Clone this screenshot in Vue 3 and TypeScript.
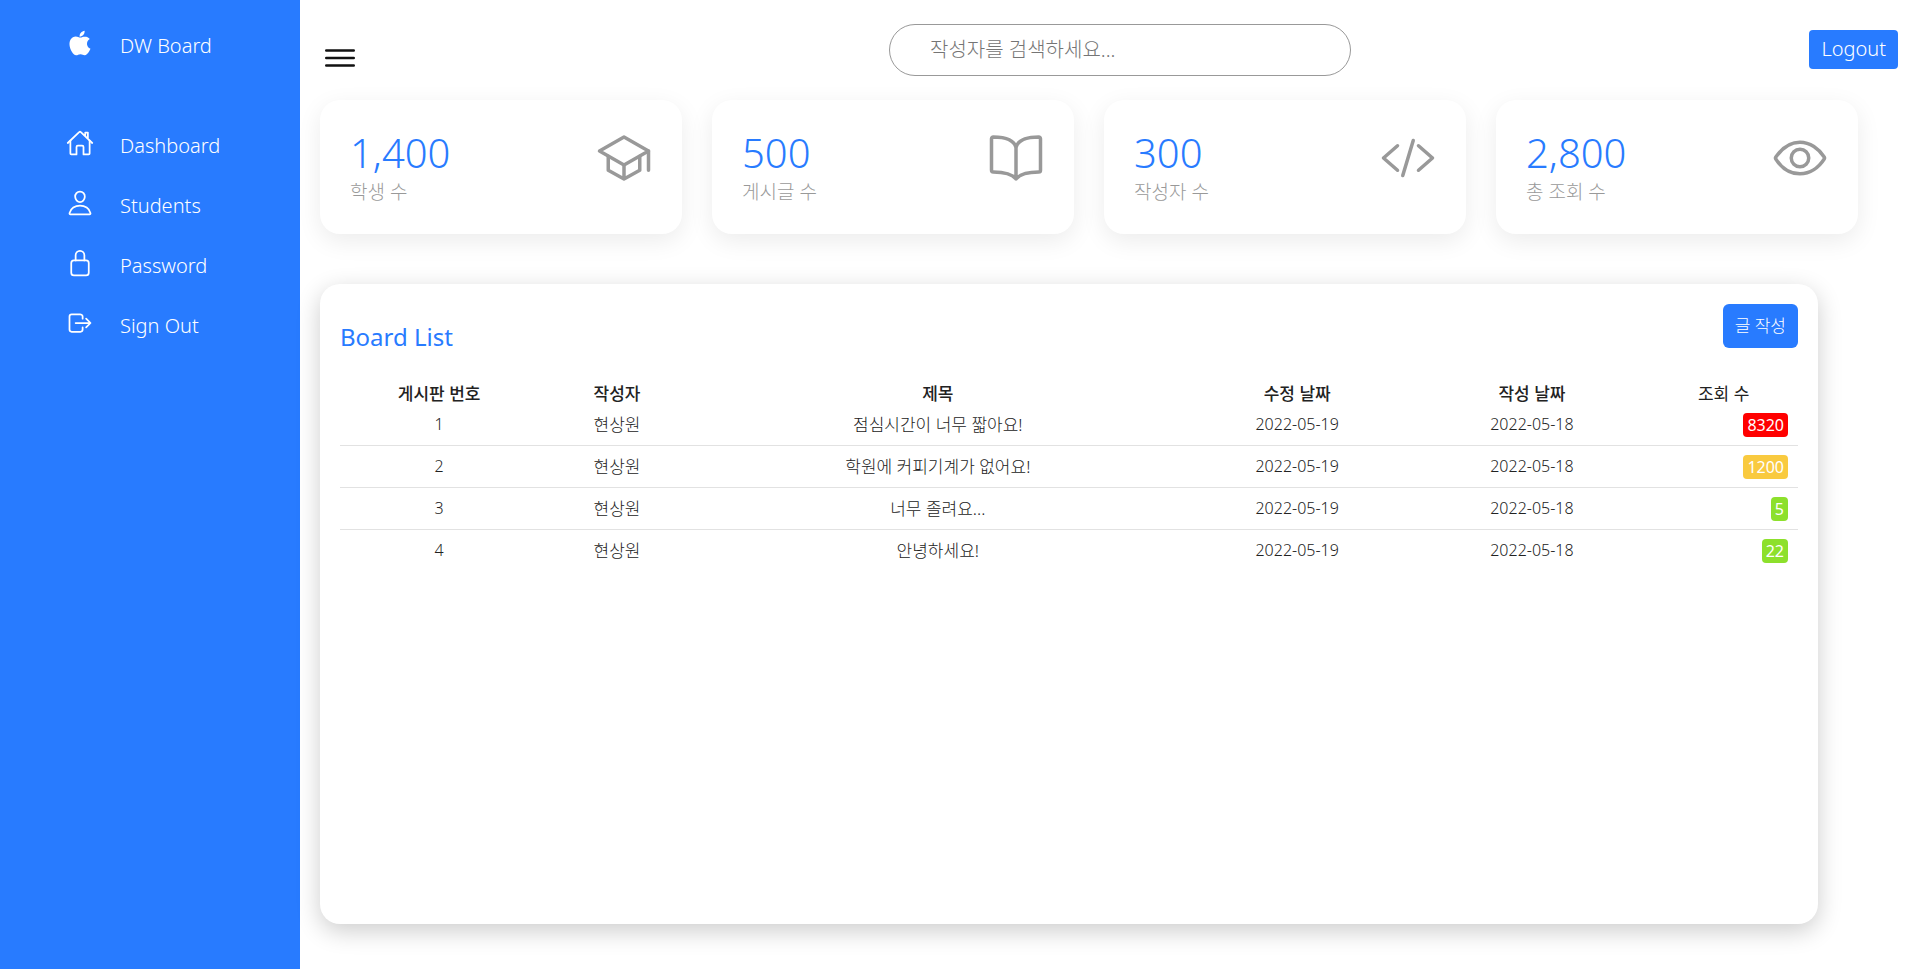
<script setup lang="ts">
import { ref, computed } from 'vue'

interface Icon {
  strokes: string[]
  fill?: boolean
}

interface Post {
  id: number
  writer: string
  title: string
  updated: string
  created: string
  views: number
}

const icons: Record<string, Icon> = {
  apple: {
    fill: true,
    strokes: [
      'M349.13 136.86c-40.32 0-57.36 19.24-85.44 19.24-28.79 0-50.75-19.1-85.69-19.1-34.2 0-70.67 20.88-93.83 56.45-32.52 50.16-27 144.63 25.67 225.11 18.84 28.81 44 61.12 77 61.47h.6c28.68 0 37.2-18.78 76.67-19h.6c38.88 0 46.68 18.89 75.24 18.89h.6c33-.35 59.51-36.15 78.35-64.85 13.56-20.64 18.6-31 29-54.35-76.19-28.92-88.43-136.93-13.08-178.34-23-28.8-55.32-45.48-85.79-45.48z',
      'M340.25 32c-24 1.63-52 16.91-68.4 36.86-14.88 18.08-27.12 44.9-22.32 70.91h1.92c25.56 0 51.72-15.39 67-35.11 14.72-18.77 25.88-45.37 21.8-72.66z',
    ],
  },
  home: {
    strokes: [
      'M80 212v236a16 16 0 0016 16h96V328a24 24 0 0124-24h80a24 24 0 0124 24v136h96a16 16 0 0016-16V212',
      'M480 256L266.89 52c-5-5.28-16.69-5.34-21.78 0L32 256M400 179V64h-48v69',
    ],
  },
  person: {
    strokes: [
      'M344 144c-3.92 52.87-44 96-88 96s-84.15-43.12-88-96c-4-55 35-96 88-96s92 42 88 96z',
      'M256 304c-87 0-175.3 48-191.64 138.6C62.39 453.52 68.57 464 80 464h352c11.44 0 17.62-10.48 15.65-21.4C431.3 352 343 304 256 304z',
    ],
  },
  lock: {
    strokes: [
      'M336 208v-95a80 80 0 00-160 0v95',
      'M144 208h224a48 48 0 0148 48v176a48 48 0 01-48 48H144a48 48 0 01-48-48V256a48 48 0 0148-48z',
    ],
  },
  logout: {
    strokes: [
      'M304 336v40a40 40 0 01-40 40H104a40 40 0 01-40-40V136a40 40 0 0140-40h152c22.09 0 48 17.91 48 40v40M368 336l80-80-80-80M176 256h256',
    ],
  },
  menu: { strokes: ['M80 160h352M80 256h352M80 352h352'] },
  school: {
    strokes: [
      'M32 192L256 64l224 128-224 128L32 192z',
      'M112 240v128l144 80 144-80V240M480 368V192M256 320v128',
    ],
  },
  book: {
    strokes: [
      'M256 160c16-63.16 76.43-95.41 208-96a15.94 15.94 0 0116 16v288a16 16 0 01-16 16c-128 0-177.45 25.81-208 64-30.37-38-80-64-208-64-9.88 0-16-8.05-16-17.93V80a15.94 15.94 0 0116-16c131.57.59 192 32.84 208 96zM256 160v288',
    ],
  },
  code: { strokes: ['M160 368L32 256l128-112M352 368l128-112-128-112M304 96l-96 320'] },
  eye: {
    strokes: [
      'M255.66 112c-77.94 0-157.89 45.11-220.83 135.33a16 16 0 00-.27 17.77C82.92 340.8 161.8 400 255.66 400c92.84 0 173.34-59.38 221.79-135.25a16.14 16.14 0 000-17.47C428.89 172.28 347.8 112 255.66 112z',
      'M336 256a80 80 0 11-160 0 80 80 0 01160 0z',
    ],
  },
}

const navItems = [
  { icon: 'apple', label: 'DW Board' },
  { icon: 'home', label: 'Dashboard' },
  { icon: 'person', label: 'Students' },
  { icon: 'lock', label: 'Password' },
  { icon: 'logout', label: 'Sign Out' },
]

const stats = [
  { value: 1400, label: '학생 수', icon: 'school' },
  { value: 500, label: '게시글 수', icon: 'book' },
  { value: 300, label: '작성자 수', icon: 'code' },
  { value: 2800, label: '총 조회 수', icon: 'eye' },
]

const posts: Post[] = [
  { id: 1, writer: '현상원', title: '점심시간이 너무 짧아요!', updated: '2022-05-19', created: '2022-05-18', views: 8320 },
  { id: 2, writer: '현상원', title: '학원에 커피기계가 없어요!', updated: '2022-05-19', created: '2022-05-18', views: 1200 },
  { id: 3, writer: '현상원', title: '너무 졸려요...', updated: '2022-05-19', created: '2022-05-18', views: 5 },
  { id: 4, writer: '현상원', title: '안녕하세요!', updated: '2022-05-19', created: '2022-05-18', views: 22 },
]

const keyword = ref('')
const visiblePosts = computed(() => posts.filter((p) => p.writer.includes(keyword.value.trim())))

function level(views: number): string {
  if (views >= 5000) return 'hot'
  if (views >= 1000) return 'warm'
  return 'calm'
}
</script>

<template>
  <div class="layout">
    <nav class="sidebar">
      <ul class="nav">
        <li v-for="item in navItems" :key="item.label" class="nav-item">
          <a href="#" class="nav-link">
            <span class="nav-icon">
              <svg class="icon" :class="{ solid: icons[item.icon].fill }" viewBox="0 0 512 512" aria-hidden="true">
                <path v-for="d in icons[item.icon].strokes" :key="d" :d="d" />
              </svg>
            </span>
            <span class="nav-label">{{ item.label }}</span>
          </a>
        </li>
      </ul>
    </nav>

    <main class="main">
      <header class="topbar">
        <button type="button" class="toggle" aria-label="메뉴">
          <svg class="icon" viewBox="0 0 512 512" aria-hidden="true">
            <path v-for="d in icons.menu.strokes" :key="d" :d="d" />
          </svg>
        </button>
        <input v-model="keyword" class="search" type="text" placeholder="작성자를 검색하세요..." aria-label="작성자 검색" />
        <a href="#" class="logout">Logout</a>
      </header>

      <section class="stats">
        <article v-for="stat in stats" :key="stat.label" class="card">
          <div>
            <div class="value">{{ stat.value.toLocaleString('en-US') }}</div>
            <div class="caption">{{ stat.label }}</div>
          </div>
          <svg class="icon" viewBox="0 0 512 512" aria-hidden="true">
            <path v-for="d in icons[stat.icon].strokes" :key="d" :d="d" />
          </svg>
        </article>
      </section>

      <section class="board">
        <div class="board-head">
          <h2>Board List</h2>
          <a href="#" class="write">글 작성</a>
        </div>
        <table>
          <colgroup>
            <col class="c-id" />
            <col class="c-writer" />
            <col />
            <col class="c-date" />
            <col class="c-date" />
            <col class="c-views" />
          </colgroup>
          <thead>
            <tr>
              <th scope="col">게시판 번호</th>
              <th scope="col">작성자</th>
              <th scope="col">제목</th>
              <th scope="col">수정 날짜</th>
              <th scope="col">작성 날짜</th>
              <th scope="col" class="light">조회 수</th>
            </tr>
          </thead>
          <tbody>
            <tr v-for="post in visiblePosts" :key="post.id">
              <td class="num">{{ post.id }}</td>
              <td>{{ post.writer }}</td>
              <td>{{ post.title }}</td>
              <td class="num">{{ post.updated }}</td>
              <td class="num">{{ post.created }}</td>
              <td class="views"><span class="badge" :class="level(post.views)">{{ post.views }}</span></td>
            </tr>
          </tbody>
        </table>
      </section>
    </main>
  </div>
</template>

<style>
body {
  margin: 0;
  background: #fff;
}
</style>

<style scoped>
.layout {
  --blue: #287bff;
  --grey: #999;
  display: flex;
  min-height: 100vh;
  font-family: 'Noto Sans', 'Noto Sans CJK KR', sans-serif;
  font-weight: 300;
  color: #222;
}

.layout * {
  box-sizing: border-box;
}

a {
  color: inherit;
  text-decoration: none;
}

.icon {
  display: block;
  fill: none;
  stroke: currentColor;
  stroke-width: 32;
  stroke-linecap: round;
  stroke-linejoin: round;
}

.icon.solid {
  fill: currentColor;
  stroke: none;
}

.sidebar {
  flex: 0 0 300px;
  padding-top: 13px;
  background: var(--blue);
  color: #fff;
}

.nav {
  margin: 0;
  padding: 0;
  list-style: none;
}

.nav-item:first-child {
  margin-bottom: 40px;
}

.nav-link {
  display: flex;
  align-items: center;
  gap: 10px;
  height: 60px;
  padding-left: 50px;
}

.nav-icon {
  display: flex;
  justify-content: center;
  width: 60px;
}

.nav-icon .icon {
  width: 28px;
  height: 28px;
}

.nav-label {
  padding-top: 6px;
  font-size: 20px;
  line-height: 28px;
}

.main {
  flex: 1;
  min-width: 0;
}

.topbar {
  display: grid;
  grid-template-columns: 1fr minmax(200px, 462px) 1fr;
  align-items: center;
  height: 100px;
  padding-left: 20px;
}

.toggle {
  margin-top: 16px;
  padding: 0;
  border: 0;
  background: none;
  color: #111;
  justify-self: start;
}

.toggle .icon {
  width: 40px;
  height: 40px;
}

.search {
  width: 100%;
  height: 52px;
  padding: 0 40px 2px;
  border: 1px solid var(--grey);
  border-radius: 26px;
  outline: none;
  background: #fff;
  font: inherit;
  font-size: 20px;
}

.search::placeholder {
  color: #757575;
}

.logout {
  justify-self: end;
  margin: 0 22px 2px 0;
  padding: 5px 12px 7px;
  border-radius: 4px;
  background: var(--blue);
  color: #fff;
  font-size: 20px;
  line-height: 27px;
}

.stats {
  display: grid;
  grid-template-columns: repeat(4, 1fr);
  gap: 30px;
  padding: 0 62px 0 20px;
}

.card {
  display: flex;
  justify-content: space-between;
  padding: 30px;
  border-radius: 20px;
  background: #fff;
  box-shadow: 0 7px 25px rgba(0, 0, 0, 0.08);
}

.card .icon {
  width: 56px;
  height: 56px;
  color: var(--grey);
}

.value {
  color: var(--blue);
  font-size: 40px;
  line-height: 46px;
}

.caption {
  margin-top: 4px;
  color: var(--grey);
  font-size: 19px;
  line-height: 24px;
}

.board {
  min-height: 640px;
  margin: 50px 102px 44px 20px;
  padding: 20px;
  border-radius: 20px;
  background: #fff;
  box-shadow: 0 7px 25px rgba(0, 0, 0, 0.2);
}

.board-head {
  display: flex;
  align-items: flex-start;
  justify-content: space-between;
  height: 79px;
}

h2 {
  margin: 16px 0 0;
  color: var(--blue);
  font-size: 24px;
  font-weight: 400;
  line-height: 34px;
}

.write {
  padding: 10px 12px;
  border-radius: 6px;
  background: var(--blue);
  color: #fff;
  font-size: 17px;
  font-weight: 300;
  line-height: 24px;
}

table {
  width: 100%;
  border-collapse: collapse;
  table-layout: fixed;
  font-size: 17px;
  line-height: 21px;
}

.c-id {
  width: 13.6%;
}

.c-writer {
  width: 10.8%;
}

.c-date {
  width: 16.1%;
}

.c-views {
  width: 10.2%;
}

th {
  padding: 0;
  font-weight: 500;
  line-height: 21px;
}

th.light {
  font-weight: 400;
}

td {
  padding: 10px;
  text-align: center;
}

tbody tr {
  border-bottom: 1px solid #e2e2e2;
}

tbody tr:last-child {
  border-bottom: 0;
}

.num {
  font-size: 16px;
}

.views {
  padding: 8px 10px;
  text-align: right;
}

.badge {
  display: inline-block;
  padding: 0 4px;
  border-radius: 4px;
  color: #fff;
  font-size: 16px;
  font-weight: 400;
  line-height: 24px;
  vertical-align: top;
}

.hot {
  background: #f00;
}

.warm {
  background: #f9ca3f;
}

.calm {
  background: #8de02c;
}
</style>
